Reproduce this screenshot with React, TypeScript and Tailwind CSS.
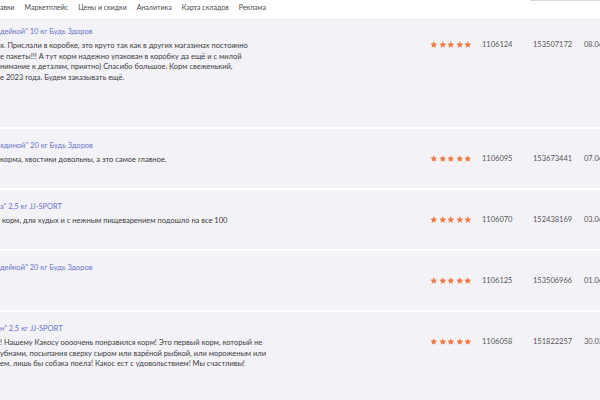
import React from "react";

const Star = () => (
  <svg width="7.5" height="7.5" viewBox="0 0 24 24" className="shrink-0">
    <path
      d="M12 1l3.3 7 7.6.8-5.7 5.2 1.6 7.5L12 17.7l-6.8 3.8 1.6-7.5L1.1 8.8l7.6-.8z"
      fill="#f17a45"
    />
  </svg>
);

type Row = {
  title: string;
  lines: string[];
  n1: string;
  n2: string;
  date: string;
  h?: string;
};

const rows: Row[] = [
  {
    title: "дейкой\u201d 10 кг Будь Здоров",
    lines: [
      "я. Прислали в коробке, это круто так как в других магазинах постоянно",
      "е пакеты!!! А тут корм надежно упакован в коробку да ещё и с милой",
      "нимание к деталям, приятно) Спасибо большое. Корм свеженький,",
      "е 2023 года. Будем заказывать ещё.",
    ],
    n1: "1106124",
    n2: "153507172",
    date: "08.04.2023",
    h: "h-[112px]",
  },
  {
    title: "ядиной\u201d 20 кг Будь Здоров",
    lines: ["корма, хвостики довольны, а это самое главное."],
    n1: "1106095",
    n2: "153673441",
    date: "07.04.2023",
  },
  {
    title: "а\u201d 2,5 кг JJ-SPORT",
    lines: [" корм, для худых и с нежным пищеварением подошло на все 100"],
    n1: "1106070",
    n2: "152438169",
    date: "03.04.2023",
  },
  {
    title: "дейкой\u201d 20 кг Будь Здоров",
    lines: [],
    n1: "1106125",
    n2: "153506966",
    date: "01.04.2023",
  },
  {
    title: "н\u201d 2,5 кг JJ-SPORT",
    lines: [
      "! Нашему Какосу оооочень понравился корм! Это первый корм, который не",
      "убнами, посыпания сверху сыром или варёной рыбкой, или мороженым или",
      "ем, лишь бы собака поела! Какос ест с удовольствием! Мы счастливы!",
    ],
    n1: "1106058",
    n2: "151822257",
    date: "30.03.2023",
  },
];

export default function App() {
  return (
    <div
      className="w-[600px] h-[400px] overflow-hidden bg-[#f3f3f7] flex flex-col"
      style={{ fontFamily: "Lato, 'Open Sans', sans-serif" }}
    >
      <div className="relative z-10 h-[20px] shrink-0 bg-white border-b border-[#e8e8ee] flex items-start">
        <div className="flex gap-[10px] pt-[3px] text-[7px] leading-[9px] text-[#4a4a4a] whitespace-nowrap">
          <span>авки</span>
          <span>Маркетплейс</span>
          <span>Цены и скидки</span>
          <span>Аналитика</span>
          <span>Карта складов</span>
          <span>Реклама</span>
        </div>
        <div className="ml-auto w-[70px] h-[1px] bg-[#d8d8de]" />
      </div>
      <div className="-mt-[5px] flex-1 flex flex-col gap-[2px] bg-white">
        {rows.map((r, i) => (
          <div key={i} className={`flex items-start shrink-0 last:grow bg-[#f3f3f7] ${r.h ?? ""}`}>
            <div className="w-[430px] shrink-0 pt-[12px] pb-[22.5px] whitespace-pre">
              <div className="text-[7.5px] leading-[10px] text-[#6a72c8]">{r.title}</div>
              <div className="mt-[4px] min-h-[10.5px] text-[7.5px] leading-[10.5px] text-[#3a3a3a]">
                {r.lines.map((l, j) => (
                  <div key={j}>{l}</div>
                ))}
              </div>
            </div>
            <div className="pt-[26px] flex items-center text-[7.5px] leading-[8px] text-[#555] whitespace-nowrap">
              <div className="w-[52px] flex gap-[1px]">
                <Star />
                <Star />
                <Star />
                <Star />
                <Star />
              </div>
              <div className="w-[51px]">{r.n1}</div>
              <div className="w-[51px]">{r.n2}</div>
              <div>{r.date}</div>
            </div>
          </div>
        ))}
      </div>
    </div>
  );
}
